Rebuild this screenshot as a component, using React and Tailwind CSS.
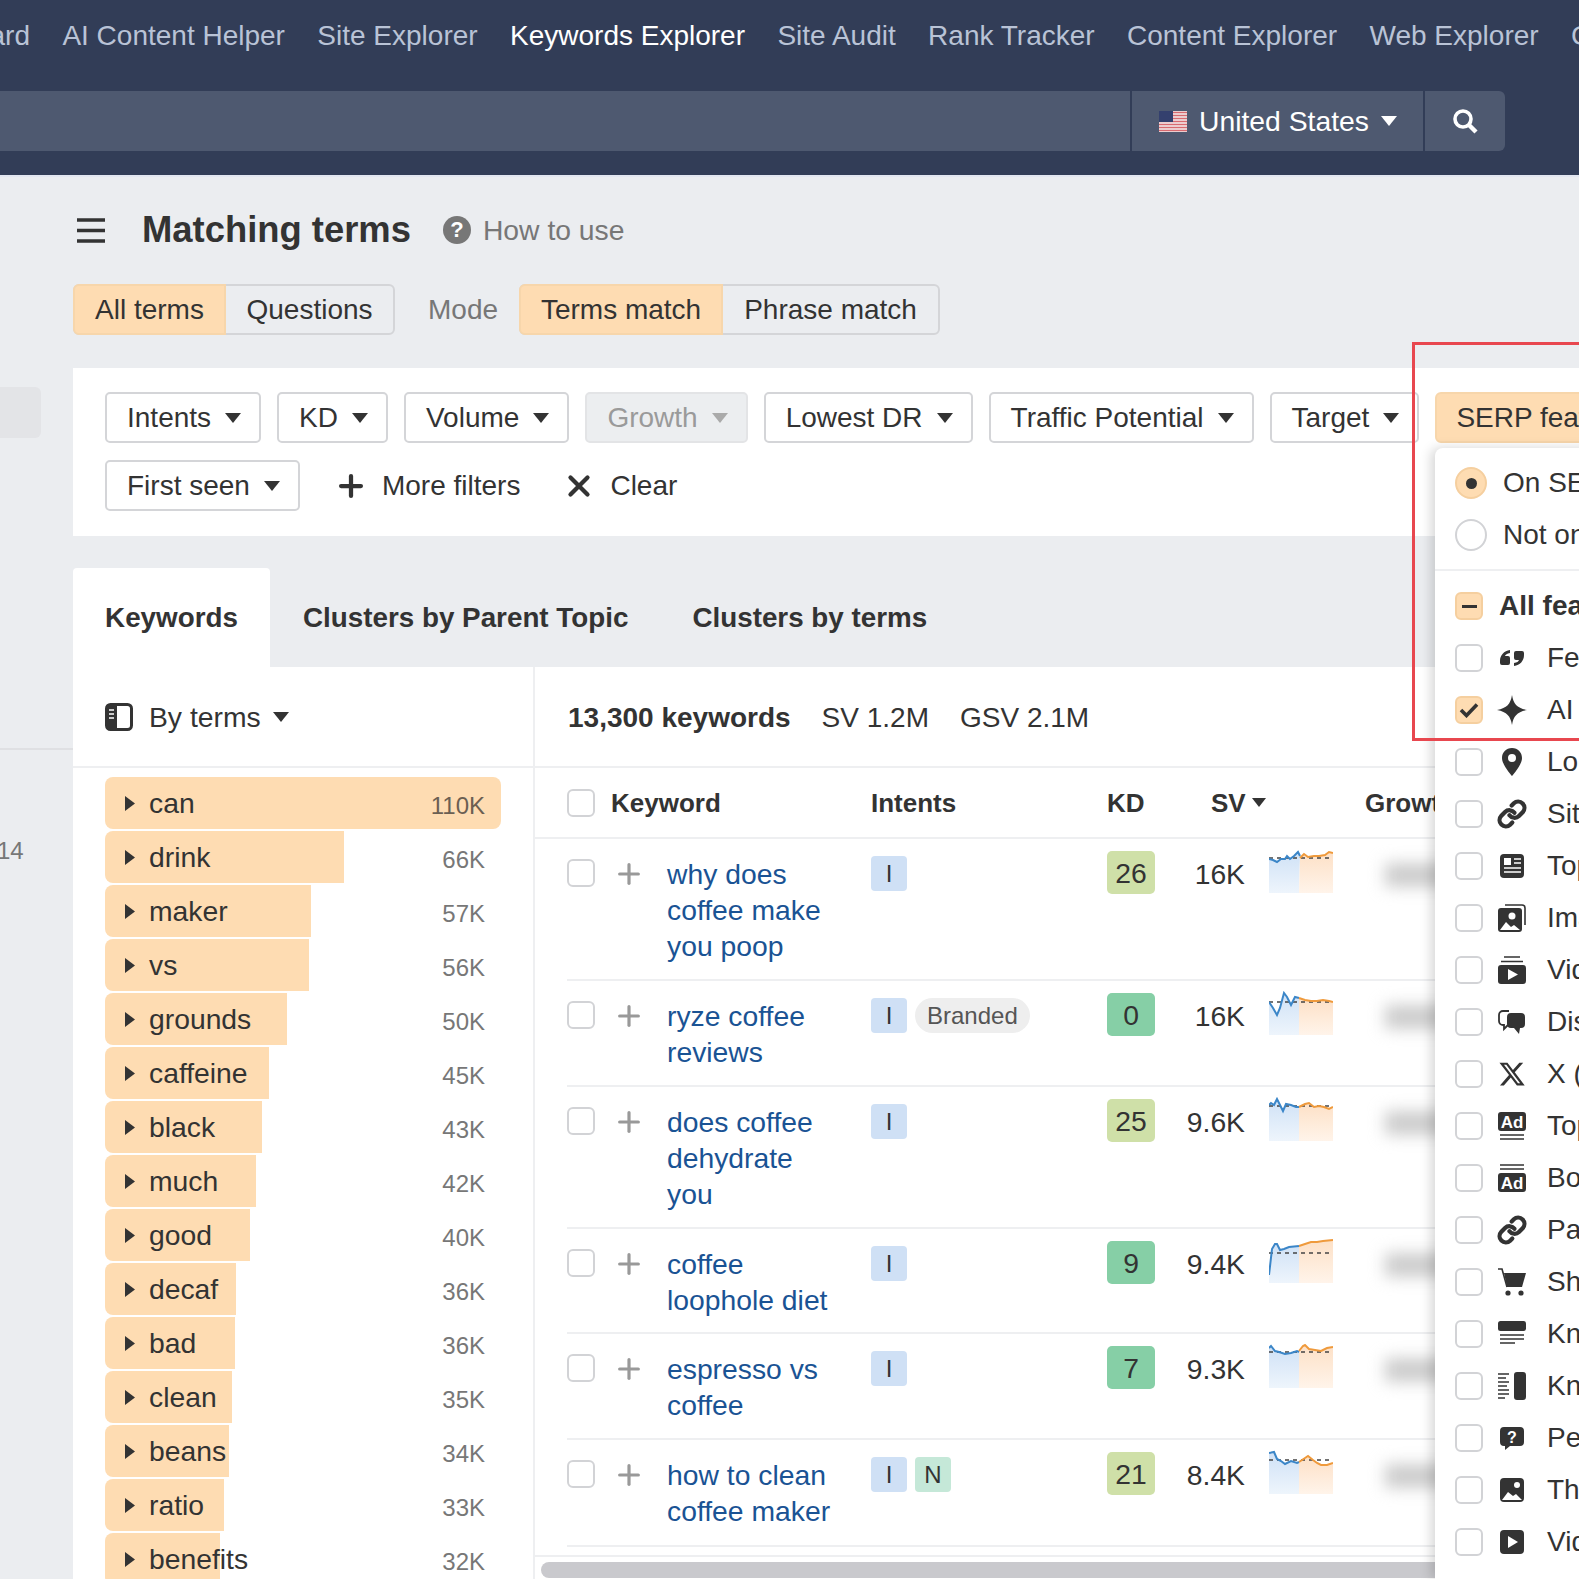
import React from "react";
import { Link, Plus, X } from "lucide-react";

const navItems = ["Dashboard", "AI Content Helper", "Site Explorer", "Keywords Explorer", "Site Audit", "Rank Tracker", "Content Explorer", "Web Explorer", "Competitive Analysis"];

const terms = [
  ["can", 396, "110K"], ["drink", 239, "66K"], ["maker", 206, "57K"], ["vs", 204, "56K"], ["grounds", 182, "50K"],
  ["caffeine", 164, "45K"], ["black", 157, "43K"], ["much", 151, "42K"], ["good", 145, "40K"], ["decaf", 131, "36K"],
  ["bad", 130, "36K"], ["clean", 127, "35K"], ["beans", 124, "34K"], ["ratio", 119, "33K"], ["benefits", 115, "32K"],
];

const rows = [
  { kw: ["why does", "coffee make", "you poop"], h: "h-[142px]", kd: 26, light: true, sv: "16K", dash: 9,
    blue: "0,10 4,11 8,13 12,10 16,10 18,7 21,10 25,7 29,3 31,7", orange: "31,9 35,5 39,8 45,7 50,7 56,6 60,3 64,4" },
  { kw: ["ryze coffee", "reviews"], h: "h-[106px]", branded: true, kd: 0, sv: "16K", dash: 11,
    blue: "0,11 4,17 8,24 11,17 15,2 18,6 22,14 26,6 30,7", orange: "30,7 36,9 42,10 48,10 54,9 60,10 64,11" },
  { kw: ["does coffee", "dehydrate", "you"], h: "h-[142px]", kd: 25, light: true, sv: "9.6K", dash: 9,
    blue: "0,8 2,6 5,8 8,2 10,6 14,14 17,7 22,8 27,10 30,10", orange: "30,10 36,7 40,6 45,10 50,9 55,10 60,12 64,10" },
  { kw: ["coffee", "loophole diet"], h: "h-[105px]", kd: 9, sv: "9.4K", dash: 14,
    blue: "0,36 3,10 6,5 8,5 11,11 15,10 20,8 30,7", orange: "30,7 36,5 42,3 48,3 54,2 64,1" },
  { kw: ["espresso vs", "coffee"], h: "h-[106px]", kd: 7, sv: "9.3K", dash: 8,
    blue: "0,4 2,2 6,7 10,8 16,10 22,9 28,7 30,8", orange: "30,7 34,2 36,1 40,5 46,6 52,7 58,4 64,3" },
  { kw: ["how to clean", "coffee maker"], h: "h-[107px]", n: true, kd: 21, light: true, sv: "8.4K", dash: 10,
    blue: "0,3 5,2 8,9 12,11 16,14 22,11 28,13 30,12", orange: "30,12 36,8 39,6 44,10 48,13 52,15 58,15 64,13" },
];

const Caret = ({ color = "#333", className = "" }) => (
  <svg width="16" height="10" viewBox="0 0 16 10" className={`shrink-0 ${className}`}><polygon points="0,0 16,0 8,10" fill={color} /></svg>
);

const CheckBox = ({ className = "" }) => (
  <span className={`block h-[28px] w-[28px] shrink-0 rounded-[6px] border-2 border-[#d2d3d6] bg-white ${className}`} />
);

const FilterBtn = ({ label, disabled }) => (
  <button className={`flex h-[51px] shrink-0 items-center gap-[14px] rounded-[5px] border-2 pr-[18px] pl-[20px] ${disabled ? "border-[#e3e4e6] bg-[#eceef0] text-[#9a9a9a]" : "border-[#d4d5d8] bg-white"}`}>
    {label}
    <Caret color={disabled ? "#aaa" : "#333"} />
  </button>
);

const Spark = ({ r }) => (
  <svg width="64" height="44" viewBox="0 0 64 44" className="mt-[10px] ml-[24px] shrink-0">
    <defs>
      <linearGradient id="sb" x1="0" y1="0" x2="0" y2="1"><stop offset="0" stopColor="#cfe1f6" /><stop offset="1" stopColor="#eef5fc" /></linearGradient>
      <linearGradient id="so" x1="0" y1="0" x2="0" y2="1"><stop offset="0" stopColor="#fde0c6" /><stop offset="1" stopColor="#fff4ea" /></linearGradient>
    </defs>
    <polygon points={`${r.blue} 30,44 0,44`} fill="url(#sb)" />
    <polygon points={`${r.orange} 64,44 30,44`} fill="url(#so)" />
    <line x1="0" x2="64" y1={r.dash} y2={r.dash} stroke="#444" strokeWidth="1.4" strokeDasharray="4 4" />
    <polyline points={r.blue} fill="none" stroke="#3b86c8" strokeWidth="2" />
    <polyline points={r.orange} fill="none" stroke="#ef9a3c" strokeWidth="2" />
  </svg>
);

const Dark = "#333";
const serpIcons = {
  quote: (
    <g fill={Dark}>
      <path d="M13 7c-6 1-10 5-10 11v2a2 2 0 0 0 2 2h6a2 2 0 0 0 2-2v-5a2 2 0 0 0-2-2H8c.5-1.500 2-2.500 5-3z" />
      <path d="M17 23c6-1 10-5 10-11v-2a2 2 0 0 0-2-2h-6a2 2 0 0 0-2 2v5a2 2 0 0 0 2 2h3c-.5 1.500-2 2.500-5 3z" />
    </g>
  ),
  spark: <path fill={Dark} d="M15 0c1.500 9 5 13 15 15-10 2-13.500 6-15 15-1.500-9-5-13-15-15 10-2 13.500-6 15-15z" />,
  pin: <path fill={Dark} fillRule="evenodd" d="M15 1C9 1 5 5.500 5 11c0 7 10 18 10 18s10-11 10-18c0-5.500-4-10-10-10zm0 6a4 4 0 1 1 0 8 4 4 0 0 1 0-8z" />,
  stories: (
    <g>
      <rect x="3" y="3" width="24" height="24" rx="4" fill={Dark} />
      <rect x="7" y="7" width="7" height="7" fill="#fff" />
      <path d="M17 8h7M17 12h7M7 17h17M7 21h17" stroke="#fff" strokeWidth="1.6" />
    </g>
  ),
  images: (
    <g>
      <path d="M8 2h17a3 3 0 0 1 3 3v17" fill="none" stroke={Dark} strokeWidth="1.6" />
      <rect x="1" y="5" width="24" height="24" rx="3" fill={Dark} />
      <circle cx="15" cy="13" r="3.500" fill="#fff" />
      <path d="M3 27l6-8 5 5 3-2 6 5z" fill="#fff" />
    </g>
  ),
  videos: (
    <g>
      <path d="M7 2h16M4 6.500h22" stroke={Dark} strokeWidth="1.6" />
      <rect x="1" y="10" width="28" height="19" rx="3" fill={Dark} />
      <polygon points="11,14 21,19.500 11,25" fill="#fff" />
    </g>
  ),
  discussion: (
    <g>
      <path d="M12 4H6a4 4 0 0 0-4 4v6a4 4 0 0 0 4 4h1v4l4-4" fill="none" stroke={Dark} strokeWidth="1.8" />
      <path d="M14 6h10a4 4 0 0 1 4 4v7a4 4 0 0 1-4 4h-1l-1 6-5-6h-3a4 4 0 0 1-4-4v-7a4 4 0 0 1 4-4z" fill={Dark} />
    </g>
  ),
  x: (
    <g transform="translate(1 1) scale(1.17)">
      <path fill={Dark} d="M18.244 2.250h3.308l-7.227 8.260 8.502 11.240H16.170l-5.214-6.817L4.990 21.750H1.680l7.730-8.835L1.254 2.250H8.080l4.713 6.231zm-1.161 17.520h1.833L7.084 4.126H5.117z" />
    </g>
  ),
  adTop: (
    <g>
      <rect x="1" y="1" width="28" height="19" rx="3" fill={Dark} />
      <text x="15" y="16.500" textAnchor="middle" fontSize="17" fontWeight="700" fill="#fff" fontFamily="Liberation Sans">Ad</text>
      <path d="M3 24h24M3 28h24" stroke={Dark} strokeWidth="1.6" />
    </g>
  ),
  adBottom: (
    <g>
      <path d="M3 2h24M3 6h24" stroke={Dark} strokeWidth="1.6" />
      <rect x="1" y="10" width="28" height="19" rx="3" fill={Dark} />
      <text x="15" y="25.500" textAnchor="middle" fontSize="17" fontWeight="700" fill="#fff" fontFamily="Liberation Sans">Ad</text>
    </g>
  ),
  cart: (
    <g fill={Dark}>
      <path d="M1 2h4l5 18" fill="none" stroke={Dark} strokeWidth="1.6" />
      <polygon points="7,6 29,6 25,20 10,20" />
      <circle cx="11" cy="26" r="2.600" />
      <circle cx="24" cy="26" r="2.600" />
    </g>
  ),
  kCard: (
    <g>
      <rect x="1" y="2" width="28" height="10" rx="2.500" fill={Dark} />
      <path d="M3 16h24M3 20h24M3 24h15" stroke={Dark} strokeWidth="1.6" />
    </g>
  ),
  kPanel: (
    <g>
      <rect x="17" y="1" width="12" height="28" rx="3" fill={Dark} />
      <path d="M1 3h11M1 7h8M1 11h11M1 15h9M1 19h11M1 23h11M1 27h7" stroke={Dark} strokeWidth="1.6" />
    </g>
  ),
  paa: (
    <g>
      <path d="M7 4h16a4 4 0 0 1 4 4v11a4 4 0 0 1-4 4H13l-5 4v-4H7a4 4 0 0 1-4-4V8a4 4 0 0 1 4-4z" fill={Dark} />
      <text x="15" y="20" textAnchor="middle" fontSize="16" fontWeight="700" fill="#fff" fontFamily="Liberation Sans">?</text>
    </g>
  ),
  thumb: (
    <g>
      <rect x="3" y="3" width="24" height="24" rx="4" fill={Dark} />
      <circle cx="20" cy="10" r="3" fill="#fff" />
      <path d="M5 25l6-8 5 4 3-2 6 6z" fill="#fff" />
    </g>
  ),
  play: (
    <g>
      <rect x="3" y="3" width="24" height="24" rx="4" fill={Dark} />
      <polygon points="11,9 21,15 11,21" fill="#fff" />
    </g>
  ),
};

const serpList = [
  ["quote", "Featured snippet"], ["spark", "AI Overview"], ["pin", "Local pack"], ["link", "Sitelinks"], ["stories", "Top stories"],
  ["images", "Image pack"], ["videos", "Videos"], ["discussion", "Discussions and forums"], ["x", "X (Twitter)"], ["adTop", "Top ads"],
  ["adBottom", "Bottom ads"], ["link", "Paid sitelinks"], ["cart", "Shopping results"], ["kCard", "Knowledge card"], ["kPanel", "Knowledge panel"],
  ["paa", "People also ask"], ["thumb", "Thumbnails"], ["play", "Video preview"],
];

const SerpIcon = ({ name }) =>
  name === "link" ? (
    <Link size={30} strokeWidth={3.4} color={Dark} className="shrink-0" />
  ) : (
    <svg width="30" height="30" viewBox="0 0 30 30" className="shrink-0">{serpIcons[name]}</svg>
  );

const SerpDropdown = () => (
  <div className="absolute top-[448px] left-[1435px] h-[1131px] w-[300px] rounded-tl-[8px] bg-white pt-[9px] text-[28px] whitespace-nowrap shadow-[-4px_0_12px_rgba(0,0,0,0.16)]">
    <div className="flex h-[52px] items-center gap-[16px] pl-[20px]">
      <span className="flex h-[32px] w-[32px] items-center justify-center rounded-full border-2 border-[#f5cf9f] bg-[#fedcb2]">
        <span className="h-[11px] w-[11px] rounded-full bg-[#333]" />
      </span>
      On SERP
    </div>
    <div className="flex h-[52px] items-center gap-[16px] pl-[20px]">
      <span className="h-[32px] w-[32px] rounded-full border-2 border-[#d2d3d6]" />
      Not on SERP
    </div>
    <div className="mt-[8px] mb-[9px] h-[2px] bg-[#eeeff1]" />
    <div className="flex h-[52px] items-center gap-[16px] pl-[20px] font-bold">
      <span className="flex h-[28px] w-[28px] items-center justify-center rounded-[6px] border-2 border-[#f5cf9f] bg-[#fedcb2]">
        <span className="h-[3px] w-[15px] bg-[#333]" />
      </span>
      All features
    </div>
    {serpList.map(([icon, label], i) => (
      <div key={label} className="flex h-[52px] items-center pl-[20px]">
        {i === 1 ? (
          <span className="flex h-[28px] w-[28px] shrink-0 items-center justify-center rounded-[6px] border-2 border-[#f5cf9f] bg-[#fedcb2]">
            <svg width="20" height="16" viewBox="0 0 20 16"><path d="M2 8l5.500 5.500L18 2.500" fill="none" stroke="#333" strokeWidth="3.6" /></svg>
          </span>
        ) : (
          <CheckBox />
        )}
        <span className="mr-[20px] ml-[14px] flex"><SerpIcon name={icon} /></span>
        {label}
      </div>
    ))}
  </div>
);

const App = () => (
  <div className="relative h-[1579px] w-[1579px] overflow-hidden bg-[#ebedf0] font-['Liberation_Sans',Arial,sans-serif] text-[28.3px] leading-[36px] text-[#333]">
    {/* top nav */}
    <div className="h-[177px] border-b-2 border-[#e2e6f0] bg-[#323d57] text-[28px]">
      <div className="flex h-[91px] items-center gap-[32.4px] pb-[19px] whitespace-nowrap text-[#b9c3d6]">
        {navItems.map((n, i) => (
          <span key={n} className={`${i === 0 ? "-ml-[107px]" : ""} ${n === "Keywords Explorer" ? "text-white" : ""}`}>{n}</span>
        ))}
      </div>
      <div className="flex h-[60px] gap-[2px] pr-[74px] text-[28.3px] text-white">
        <div className="flex-1 bg-[#4e5970]" />
        <div className="flex w-[291px] items-center gap-[12px] bg-[#4e5970] pl-[27px]">
          <svg width="28" height="21" viewBox="0 0 28 21">
            <rect width="28" height="21" fill="#f3eeee" />
            <path d="M0 1.500h28M0 4.500h28M0 7.500h28M0 10.500h28M0 13.500h28M0 16.500h28M0 19.500h28" stroke="#d86a70" strokeWidth="1.5" />
            <rect width="14" height="11" fill="#34406e" />
          </svg>
          United States
          <Caret color="#fff" />
        </div>
        <div className="flex w-[80px] items-center justify-center rounded-r-[6px] bg-[#4e5970]">
          <svg width="26" height="26" viewBox="0 0 26 26" fill="none" stroke="#fff">
            <circle cx="11" cy="11" r="8" strokeWidth="3.6" />
            <path d="M17 17l7 7" strokeWidth="4.4" />
          </svg>
        </div>
      </div>
    </div>

    <div className="flex">
      {/* cropped side menu */}
      <aside className="w-[73px] shrink-0 text-[24px] text-[#777]">
        <div className="mt-[210px] h-[51px] w-[41px] rounded-r-[6px] bg-[#e3e4e7]" />
        <div className="mt-[310px] h-[2px] bg-[#dfe0e3]" />
        <div className="mt-[83px] -ml-[3px]">14</div>
      </aside>

      <main className="w-[1506px] shrink-0">
        <div className="mt-[33px] flex h-[40px] items-center">
          <svg width="28" height="25" viewBox="0 0 28 25" className="ml-[4px]"><path d="M0 2h28M0 12.500h28M0 23h28" stroke="#333" strokeWidth="3.6" /></svg>
          <h1 className="ml-[37px] text-[36.4px] font-bold">Matching terms</h1>
          <span className="ml-[32px] flex h-[28px] w-[28px] items-center justify-center rounded-full bg-[#777] text-[22px] font-bold text-white">?</span>
          <span className="ml-[12px] text-[#777]">How to use</span>
        </div>

        <div className="mt-[34px] flex h-[51px] items-center text-[28px]">
          <div className="flex h-full rounded-[6px] border-2 border-[#d4d5d8]">
            <span className="-my-[2px] -ml-[2px] flex w-[153px] items-center justify-center rounded-l-[6px] border-2 border-[#f7d6ab] bg-[#fedcb2]">All terms</span>
            <span className="flex w-[167px] items-center justify-center">Questions</span>
          </div>
          <span className="ml-[33px] text-[#777]">Mode</span>
          <div className="ml-[21px] flex h-full rounded-[6px] border-2 border-[#d4d5d8]">
            <span className="-my-[2px] -ml-[2px] flex w-[204px] items-center justify-center rounded-l-[6px] border-2 border-[#f7d6ab] bg-[#fedcb2]">Terms match</span>
            <span className="flex w-[215px] items-center justify-center">Phrase match</span>
          </div>
        </div>

        {/* filters */}
        <div className="mt-[33px] flex h-[168px] flex-col gap-[17px] bg-white pt-[24px] pl-[32px] text-[28px]">
          <div className="flex gap-[16px] whitespace-nowrap">
            <FilterBtn label="Intents" />
            <FilterBtn label="KD" />
            <FilterBtn label="Volume" />
            <FilterBtn label="Growth" disabled />
            <FilterBtn label="Lowest DR" />
            <FilterBtn label="Traffic Potential" />
            <FilterBtn label="Target" />
            <button className="flex h-[51px] shrink-0 items-center gap-[14px] rounded-[6px] border-2 border-[#f7d6ab] bg-[#fedcb2] px-[19px]">SERP features<Caret /></button>
          </div>
          <div className="flex items-center">
            <FilterBtn label="First seen" />
            <Plus size={34} strokeWidth={3} className="ml-[34px]" />
            <span className="ml-[14px]">More filters</span>
            <X size={34} strokeWidth={3} className="ml-[42px]" />
            <span className="ml-[14px]">Clear</span>
          </div>
        </div>

        {/* tabs */}
        <div className="mt-[31px] flex h-[100px] items-center pt-[1px] text-[27.8px] font-bold">
          <span className="flex h-full w-[197px] items-center justify-center rounded-t-[4px] bg-white">Keywords</span>
          <span className="ml-[33px]">Clusters by Parent Topic</span>
          <span className="ml-[64px]">Clusters by terms</span>
        </div>

        <div className="flex h-[912px] bg-white">
          {/* terms column */}
          <div className="w-[462px] shrink-0 border-r-2 border-[#eeeff1]">
            <div className="flex h-[101px] items-center border-b-2 border-[#eeeff1] pl-[32px]">
              <svg width="28" height="28" viewBox="0 0 28 28">
                <rect x="1.500" y="1.500" width="25" height="25" rx="4" fill="#fff" stroke="#333" strokeWidth="3" />
                <path d="M5 1h7v26H5a4 4 0 0 1-4-4V5a4 4 0 0 1 4-4z" fill="#333" />
                <path d="M4 7h5M4 11h5M4 15h5" stroke="#fff" strokeWidth="1.600" />
              </svg>
              <span className="ml-[16px] pt-[1px]">By terms</span>
              <Caret className="ml-[12px]" />
            </div>
            <div className="flex flex-col gap-[2px] pt-[9px] pl-[32px]">
              {terms.map(([t, w, v], i) => (
                <div key={t} className="relative flex h-[52px] w-[396px] items-center">
                  <span className={`absolute inset-y-0 left-0 rounded-l-[8px] bg-[#fedcb2] ${i === 0 ? "rounded-r-[8px]" : ""}`} style={{ width: w }} />
                  <svg width="10" height="15" viewBox="0 0 10 15" className="relative ml-[20px]"><polygon points="0,0 10,7.500 0,15" fill="#333" /></svg>
                  <span className="relative ml-[14px]">{t}</span>
                  <span className={`relative mt-[5px] ml-auto pr-[16px] text-[24px] ${i === 0 ? "text-[#6b5f52]" : "text-[#777]"}`}>{v}</span>
                </div>
              ))}
            </div>
          </div>

          {/* keyword table */}
          <div className="min-w-0 flex-1">
            <div className="flex h-[101px] items-center gap-[31px] border-b-2 border-[#eeeff1] pt-[2px] pl-[33px] text-[28px] whitespace-nowrap">
              <b>13,300 keywords</b>
              <span>SV 1.2M</span>
              <span>GSV 2.1M</span>
            </div>
            <div className="flex h-[71px] items-center border-b-2 border-[#eeeff1] pl-[32px] text-[26px] font-bold">
              <CheckBox />
              <span className="ml-[16px] w-[260px]">Keyword</span>
              <span className="w-[236px]">Intents</span>
              <span className="w-[104px]">KD</span>
              <span className="flex w-[154px] items-center gap-[6px]">SV <svg width="14" height="9" viewBox="0 0 14 9"><polygon points="0,0 14,0 7,9" fill="#333" /></svg></span>
              <span>Growth</span>
            </div>
            {rows.map((r) => (
              <div key={r.kw[0]} className={`ml-[32px] flex items-start border-b-2 border-[#eeeff1] ${r.h}`}>
                <CheckBox className="mt-[20px]" />
                <Plus size={32} strokeWidth={2.4} color="#999" className="mt-[19px] ml-[18px] shrink-0" />
                <div className="mt-[17px] ml-[22px] w-[204px] shrink-0 text-[#1a5394]">
                  {r.kw.map((l) => <div key={l}>{l}</div>)}
                </div>
                <div className="mt-[17px] flex w-[236px] shrink-0 gap-[8px]">
                  <span className="flex h-[35px] w-[36px] items-center justify-center rounded-[4px] bg-[#cfe0f5] text-[24px]">I</span>
                  {r.n && <span className="flex h-[35px] w-[36px] items-center justify-center rounded-[4px] bg-[#c5e8d8] text-[24px]">N</span>}
                  {r.branded && <span className="flex h-[35px] items-center rounded-full bg-[#eeeeee] px-[12px] text-[24px] text-[#555]">Branded</span>}
                </div>
                <span className={`mt-[12px] flex h-[43px] w-[48px] shrink-0 items-center justify-center rounded-[5px] ${r.light ? "bg-[#cfe0a8]" : "bg-[#86cfa6]"}`}>{r.kd}</span>
                <span className="mt-[17px] w-[90px] shrink-0 text-right">{r.sv}</span>
                <Spark r={r} />
                <span className="mt-[24px] ml-[52px] h-[24px] w-[80px] shrink-0 bg-[#ccc] blur-[8px]" />
              </div>
            ))}
            <div className="mt-[8px] h-[2px] bg-[#eeeff1]" />
            <div className="mt-[5px] ml-[6px] h-[16px] rounded-full bg-[#c9c9cd]" />
          </div>
        </div>
      </main>
    </div>

    <SerpDropdown />
    {/* red highlight drawn on the screenshot */}
    <div className="pointer-events-none absolute top-[342px] left-[1412px] h-[399px] w-[200px] border-[3px] border-[#e8474f]" />
  </div>
);

export default App;
